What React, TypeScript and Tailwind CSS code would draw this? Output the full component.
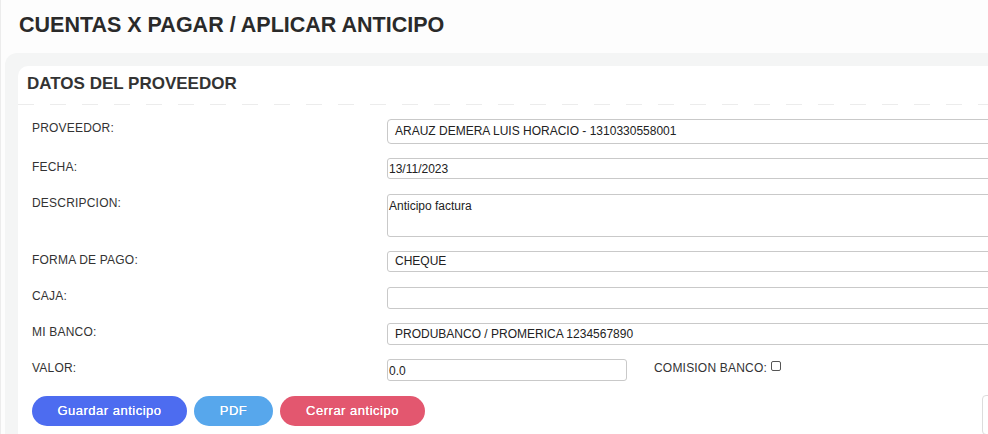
import React from "react";

const font = { fontFamily: '"Liberation Sans", Arial, sans-serif' };

// fila de formulario: etiqueta a la izquierda, control a la derecha
function Row({
  label,
  children,
  className = "",
}: {
  label: string;
  children: React.ReactNode;
  className?: string;
}) {
  return (
    <div className={`flex items-start ${className}`}>
      <label className="w-[355px] shrink-0 text-[12px] leading-[16px] tracking-[0.2px] text-[#333] pt-[1px]">
        {label}
      </label>
      {children}
    </div>
  );
}

export default function App() {
  return (
    <div
      className="h-[434px] w-[988px] overflow-hidden bg-[#fdfdfd] border-l border-[#ececec]"
      style={font}
    >
      <h1 className="pl-[18px] pt-[11px] text-[21.5px] leading-[28px] font-bold text-[#2a2a2a]">
        CUENTAS X PAGAR / APLICAR ANTICIPO
      </h1>

      {/* contenedor gris */}
      <div className="mt-[14px] ml-[4px] w-[1100px] rounded-tl-[12px] bg-[#f4f5f5] pt-[13px] pl-[13px] h-[400px]">
        {/* tarjeta blanca */}
        <div className="h-full rounded-tl-[10px] bg-white">
          <h2 className="pl-[9px] pt-[7px] text-[17px] leading-[22px] font-bold text-[#333]">
            DATOS DEL PROVEEDOR
          </h2>
          <div className="mt-[9px] h-px w-full bg-[repeating-linear-gradient(90deg,#ececec_0_16px,transparent_16px_32px)]" />

          <div className="pl-[14px] pt-[14px]">
            <Row label="PROVEEDOR:" className="mb-[14px]">
              <div className="h-[25px] w-[640px] rounded-[4px] border border-[#c9c9c9] bg-white pl-[7px] text-[12px] leading-[23px] text-[#222]">
                ARAUZ DEMERA LUIS HORACIO - 1310330558001
              </div>
            </Row>

            <Row label="FECHA:" className="mb-[15px]">
              <input
                readOnly
                value="13/11/2023"
                className="h-[21px] w-[640px] rounded-[3px] border border-[#c9c9c9] bg-white px-[1px] text-[12px] text-[#222] outline-none"
                style={font}
              />
            </Row>

            <Row label="DESCRIPCION:" className="mb-[14px]">
              <textarea
                readOnly
                value="Anticipo factura"
                className="h-[43px] w-[640px] resize-none rounded-[3px] border border-[#c9c9c9] bg-white px-[1px] pt-[4px] text-[12px] leading-[14px] text-[#222] outline-none"
                style={font}
              />
            </Row>

            <Row label="FORMA DE PAGO:" className="mb-[15px]">
              <div className="h-[21px] w-[640px] rounded-[3px] border border-[#c9c9c9] bg-white pl-[7px] text-[12px] leading-[19px] text-[#222]">
                CHEQUE
              </div>
            </Row>

            <Row label="CAJA:" className="mb-[14px]">
              <div className="h-[22px] w-[640px] rounded-[3px] border border-[#c9c9c9] bg-white" />
            </Row>

            <Row label="MI BANCO:" className="mb-[14px]">
              <div className="h-[22px] w-[640px] rounded-[3px] border border-[#c9c9c9] bg-white pl-[7px] text-[12px] leading-[20px] text-[#222]">
                PRODUBANCO / PROMERICA 1234567890
              </div>
            </Row>

            <Row label="VALOR:" className="mb-[15px]">
              <input
                readOnly
                value="0.0"
                className="h-[22px] w-[240px] rounded-[3px] border border-[#c9c9c9] bg-white px-[1px] pt-[2px] text-[12px] text-[#222] outline-none"
                style={font}
              />
              <span className="ml-[27px] pt-[1px] text-[12px] leading-[16px] tracking-[0.2px] text-[#333]">
                COMISION BANCO:
              </span>
              <span className="ml-[4px] mt-[2px] h-[10px] w-[10px] rounded-[2px] border border-[#555] bg-white" />
            </Row>

            <div className="flex items-start gap-[7px]">
              <button className="h-[30px] w-[155px] rounded-full bg-[#4d6cf0] text-[13px] font-medium tracking-[0.5px] text-white [text-shadow:0_0_0.4px_#fff]">
                Guardar anticipo
              </button>
              <button className="h-[30px] w-[79px] rounded-full bg-[#57a7ec] text-[13px] font-medium tracking-[0.5px] text-white [text-shadow:0_0_0.4px_#fff]">
                PDF
              </button>
              <button className="h-[30px] w-[145px] rounded-full bg-[#e3576f] text-[13px] font-medium tracking-[0.5px] text-white [text-shadow:0_0_0.4px_#fff]">
                Cerrar anticipo
              </button>
              <div className="ml-[550px] mt-[-1px] h-[40px] w-[40px] rounded-[4px] border border-[#dcdcdc] bg-white" />
            </div>
          </div>
        </div>
      </div>
    </div>
  );
}
